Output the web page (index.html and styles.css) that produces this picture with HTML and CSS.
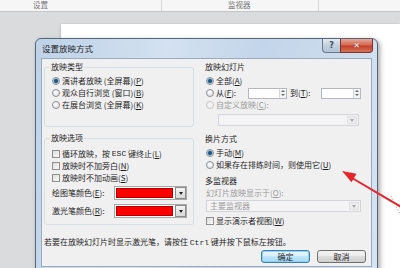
FILE: index.html
```html
<!DOCTYPE html>
<html lang="zh-CN">
<head>
<meta charset="utf-8">
<title>设置放映方式</title>
<link rel="stylesheet" href="styles.css">
</head>
<body>
<div class="app">
  <div class="toolbar">
    <div class="tcell c1">设置</div>
    <div class="tcell c2">监视器</div>
    <div class="tcell c3"></div>
  </div>
  <div class="workspace"><div class="slide"></div></div>
</div>

<div class="dialog">
  <div class="titlebar">
    <span class="title">设置放映方式</span>
    <div class="caption-btns"><span class="help">?</span><span class="close">✕</span></div>
  </div>
  <div class="client">
    <div class="cols">
      <div class="col">
        <fieldset class="grp g-type">
          <legend>放映类型</legend>
          <div class="opt"><span class="radio on"></span>演讲者放映 (全屏幕)(<u>P</u>)</div>
          <div class="opt"><span class="radio"></span>观众自行浏览 (窗口)(<u>B</u>)</div>
          <div class="opt"><span class="radio"></span>在展台浏览 (全屏幕)(<u>K</u>)</div>
        </fieldset>
        <fieldset class="grp g-opts">
          <legend>放映选项</legend>
          <div class="opt"><span class="check"></span>循环放映，按&nbsp;<span class="mono">ESC</span>&nbsp;键终止(<u>L</u>)</div>
          <div class="opt"><span class="check"></span>放映时不加旁白(<u>N</u>)</div>
          <div class="opt"><span class="check"></span>放映时不加动画(<u>S</u>)</div>
          <div class="colorrow first">
            <span class="lbl">绘图笔颜色(<u>E</u>):</span>
            <span class="picker"><span class="swatch"></span><span class="ddbtn"><span class="tri"></span></span></span>
          </div>
          <div class="colorrow">
            <span class="lbl">激光笔颜色(<u>R</u>):</span>
            <span class="picker"><span class="swatch"></span><span class="ddbtn"><span class="tri"></span></span></span>
          </div>
        </fieldset>
      </div>
      <div class="col right">
        <fieldset class="grp g-slides">
          <legend>放映幻灯片</legend>
          <div class="opt"><span class="radio on"></span>全部(<u>A</u>)</div>
          <div class="opt">
            <span class="radio"></span><span class="from">从(<u>F</u>):</span>
            <span class="spin"><span class="spinbtns"><span class="up"></span><span class="down"></span></span></span>
            <span class="to">到(<u>T</u>):</span>
            <span class="spin spin2"><span class="spinbtns"><span class="up"></span><span class="down"></span></span></span>
          </div>
          <div class="opt dis"><span class="radio"></span>自定义放映(<u>C</u>):</div>
          <div class="combo combo1"><span class="val"></span><span class="cbtn"><span class="tri"></span></span></div>
        </fieldset>
        <fieldset class="grp g-adv">
          <legend>换片方式</legend>
          <div class="opt"><span class="radio on"></span>手动(<u>M</u>)</div>
          <div class="opt"><span class="radio"></span>如果存在排练时间，则使用它(<u>U</u>)</div>
        </fieldset>
        <fieldset class="grp g-mon">
          <legend>多监视器</legend>
          <div class="opt dis">幻灯片放映显示于(<u>O</u>):</div>
          <div class="combo combo2"><span class="val">主要监视器</span><span class="cbtn"><span class="tri"></span></span></div>
          <div class="opt presenter"><span class="check"></span>显示演示者视图(<u>W</u>)</div>
        </fieldset>
      </div>
    </div>
    <div class="note">若要在放映幻灯片时显示激光笔，请按住&nbsp;<span class="mono">Ctrl</span>&nbsp;键并按下鼠标左按钮。</div>
    <div class="actions">
      <span class="btn default">确定</span>
      <span class="btn">取消</span>
    </div>
  </div>
</div>

<svg class="arrow" width="400" height="268" viewBox="0 0 400 268">
  <line x1="403" y1="208" x2="352" y2="178" stroke="#e4262c" stroke-width="2"/>
  <polygon points="342,171 356.5,173.8 351.5,182.2" fill="#e4262c"/>
  <line x1="391" y1="196" x2="401" y2="216" stroke="#e88080" stroke-width="1" stroke-dasharray="1 2"/>
</svg>
</body>
</html>
```

FILE: styles.css
```css
* { box-sizing: border-box; }
html, body { margin: 0; padding: 0; }
body {
  width: 400px;
  height: 268px;
  overflow: hidden;
  position: relative;
  font-family: "Noto Sans CJK SC", "Noto Sans", sans-serif;
  font-size: 8px;
  line-height: 12px;
  color: #1e1e1e;
  background: #dadbdd;
}
u { text-decoration: underline; text-underline-offset: 1px; }
.mono { font-family: "Liberation Mono", monospace; font-size: 8px; }

/* background application */
.app { display: flex; flex-direction: column; height: 268px; }
.toolbar {
  display: flex;
  height: 12px;
  background: #f6f6f6;
  border-bottom: 1px solid #c6c6c6;
}
.tcell {
  border-right: 1px solid #d6d6d6;
  line-height: 10px;
  font-size: 7.5px;
  color: #767676;
  white-space: nowrap;
}
.c1 { width: 162px; padding-left: 33px; }
.c2 { width: 157px; padding-left: 66px; }
.c3 { flex: 1; border-right: 0; }
.workspace {
  flex: 1;
  display: flex;
  padding: 12px 0 0 61px;
  background: #dadbdd;
}
.slide { flex: 1; background: #fff; box-shadow: -1px 0 2px rgba(0, 0, 0, .12); }

/* dialog */
.dialog {
  position: absolute;
  left: 35px;
  top: 38px;
  width: 343px;
  padding: 0 5px 5px;
  border: 1px solid #55667a;
  border-radius: 6px 6px 0 0;
  background: linear-gradient(100deg, #bfd2e8 0%, #d3e1f0 35%, #c3d5ea 60%, #d6e3f1 100%);
  box-shadow: 2px 2px 5px rgba(0, 0, 0, .35);
  display: flex;
  flex-direction: column;
}
.titlebar { height: 19px; display: flex; align-items: flex-start; }
.title { padding-left: 1px; line-height: 19px; font-size: 8.5px; color: #1b1b1b; }
.caption-btns { margin-left: auto; margin-right: -1px; display: flex; }
.help, .close {
  height: 14px;
  display: flex;
  align-items: center;
  justify-content: center;
  border: 1px solid #6a7b90;
  border-top: 0;
}
.help {
  width: 18px;
  border-radius: 0 0 0 4px;
  border-right: 0;
  background: linear-gradient(#e3eaf2, #c2cfde 50%, #b3c3d6);
  color: #3c4a5a;
  font-family: "DejaVu Sans", sans-serif;
  font-size: 8px;
  font-weight: bold;
}
.close {
  width: 33px;
  border-color: #7a3428;
  border-radius: 0 0 4px 0;
  background: linear-gradient(#e9a898, #d46a55 45%, #c3412b 55%, #d8745c);
  color: #fff;
  font-family: "DejaVu Sans", sans-serif;
  font-size: 8px;
  font-weight: bold;
  text-shadow: 0 0 1px #5a1a10;
}

.client {
  background: #f0f0f0;
  border: 1px solid #9aabbf;
  padding: 3px 4px 3px 2px;
  display: flex;
  flex-direction: column;
}
.cols { display: grid; grid-template-columns: 150px 1fr; column-gap: 6px; }
.col { display: flex; flex-direction: column; }

fieldset.grp {
  margin: 0;
  min-width: 0;
  border: 1px solid #d5dfe5;
  border-radius: 3px;
  padding: 3px 4px 0 7px;
}
legend { padding: 0 1px; margin-left: -2px; line-height: 10px; color: #1e1e1e; }
fieldset.g-type { padding-bottom: 15px; }
fieldset.g-opts { margin-top: 6px; padding-top: 5px; padding-bottom: 6px; }

.opt { display: flex; align-items: center; height: 12px; white-space: nowrap; }
.radio {
  flex: none;
  width: 8px;
  height: 8px;
  border-radius: 50%;
  border: 1px solid #8b9096;
  background: radial-gradient(circle at 40% 35%, #ffffff, #d6d8da);
  margin-right: 2px;
}
.radio.on {
  background: radial-gradient(circle, #24567f 0 1.5px, #5f98c6 2.2px, #e6edf4 3px);
}
.check {
  flex: none;
  width: 8px;
  height: 8px;
  border: 1px solid #8f8f8f;
  background: linear-gradient(135deg, #dcdcdc, #fbfbfb);
  margin-right: 2px;
}
.dis { color: #9b9b9b; }
.dis .radio { border-color: #c4c7ca; background: #f2f2f2; }

.colorrow { display: flex; align-items: center; height: 14px; white-space: nowrap; }
.colorrow.first { margin-top: 2px; }
.colorrow + .colorrow { margin-top: 4px; }
.lbl { width: 62px; flex: none; }
.picker {
  display: flex;
  height: 14px;
  border: 1px solid #a9a9a9;
  background: #fff;
  padding: 1px;
}
.swatch { width: 57px; height: 10px; background: #ff0000; outline: 1px solid #b20000; outline-offset: -1px; }
.ddbtn {
  width: 11px;
  height: 12px;
  margin: -1px -1px 0 2px;
  border: 1px solid #8c8c8c;
  background: linear-gradient(#f4f4f4, #d8d8d8);
  display: flex;
  align-items: center;
  justify-content: center;
}
.tri { width: 0; height: 0; border-left: 2.5px solid transparent; border-right: 2.5px solid transparent; border-top: 3px solid #222; }

/* right column */
.right fieldset.grp { border-color: transparent; padding-left: 5px; padding-right: 0; }
.right fieldset.g-adv { margin-top: 7px; }
.right fieldset.g-mon { margin-top: 4px; padding-top: 1px; }

.from { width: 32px; }
.to { margin-left: 3px; width: 31px; }
.spin {
  width: 39px;
  height: 11px;
  border: 1px solid #b5b9bf;
  background: #fff;
  display: flex;
  justify-content: flex-end;
}
.spin2 { width: 40px; }
.spinbtns { width: 7px; display: flex; flex-direction: column; border-left: 1px solid #d4d6d9; background: #f4f4f4; }
.spinbtns span { flex: 1; display: flex; align-items: center; justify-content: center; }
.spinbtns .up::before { content: ""; border-left: 2px solid transparent; border-right: 2px solid transparent; border-bottom: 2px solid #6a6a6a; }
.spinbtns .down::before { content: ""; border-left: 2px solid transparent; border-right: 2px solid transparent; border-top: 2px solid #6a6a6a; }

.combo {
  display: flex;
  height: 12px;
  border: 1px solid #d1d4d8;
  background: #f4f4f4;
  color: #9b9b9b;
}
.combo1 { width: 141px; margin: 3px 0 0 12px; }
.combo2 { width: 155px; margin-top: 1px; line-height: 10px; }
.combo .val { flex: 1; padding-left: 3px; }
.cbtn { width: 10px; margin: 1px; display: flex; align-items: center; justify-content: center; background: #ececec; border: 1px solid #e0e0e0; }
.combo .tri { border-top-color: #a8a8a8; }
.presenter { margin-top: 3px; }

.note { margin-top: 8px; line-height: 12px; white-space: nowrap; }
.actions { display: flex; justify-content: flex-end; gap: 7px; margin-top: 1px; padding-right: 1px; }
.btn {
  width: 49px;
  height: 13px;
  border: 1px solid #707070;
  border-radius: 3px;
  background: linear-gradient(#f3f3f3 0%, #ebebeb 45%, #dddddd 50%, #cfcfcf 100%);
  display: flex;
  align-items: center;
  justify-content: center;
  line-height: 11px;
}
.btn.default {
  border-color: #3c7fb1;
  box-shadow: inset 0 0 0 1px #8fd0f5;
  background: linear-gradient(#eaf6fd 0%, #d9f0fc 45%, #bee6fd 50%, #a7d9f5 100%);
}

.arrow { position: absolute; left: 0; top: 0; pointer-events: none; }
```
